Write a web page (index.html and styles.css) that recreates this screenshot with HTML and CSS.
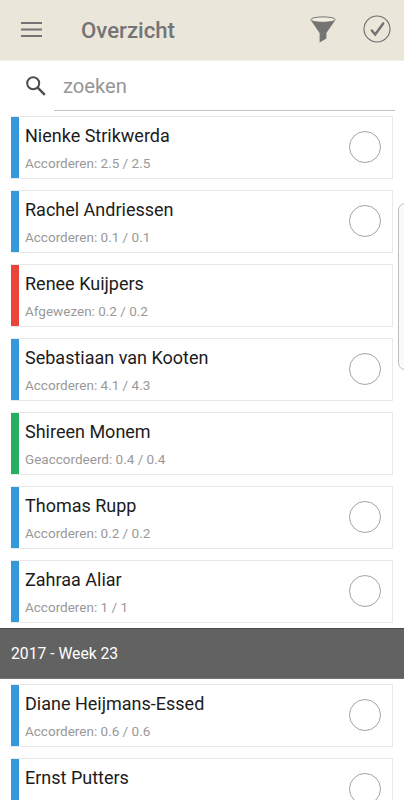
FILE: index.html
```html
<!DOCTYPE html>
<html lang="nl">
<head>
<meta charset="utf-8">
<title>Overzicht</title>
<link rel="stylesheet" href="styles.css">
</head>
<body>
<div class="app">
  <header class="topbar">
    <svg class="menu" viewBox="0 0 21 15" width="21" height="15"><path d="M0 1h21M0 7.5h21M0 14h21" stroke="#747474" stroke-width="1.9"/></svg>
    <h1>Overzicht</h1>
    <svg class="filter" viewBox="0 0 26 27" width="26" height="27"><path d="M.8 4.2 9.6 17v9.6l6.8-4V17l8.8-12.8C23 6.4 3 6.4.8 4.2Z" fill="#747474"/><ellipse cx="13" cy="3.6" rx="12.3" ry="2.7" fill="#f0ede1" stroke="#747474"/></svg>
    <svg class="approve" viewBox="0 0 28 28" width="28" height="28"><circle cx="14" cy="14" r="13" fill="none" stroke="#6c6c6c" stroke-width="1.1"/><path d="m8.8 15.5 3.4 4L20.2 8.4" fill="none" stroke="#747474" stroke-width="2.5" stroke-linecap="round"/></svg>
  </header>
  <div class="search">
    <svg viewBox="0 0 20 20" width="20" height="20"><circle cx="7.2" cy="7.2" r="6" fill="none" stroke="#4c4c4c" stroke-width="2"/><path d="m11.7 11.7 7.1 7.1" stroke="#4c4c4c" stroke-width="2.4"/></svg>
    <div class="field">zoeken</div>
  </div>
  <main class="list">
    <article class="card"><div><h2>Nienke Strikwerda</h2><p>Accorderen: 2.5 / 2.5</p></div><i class="check"></i></article>
    <article class="card"><div><h2>Rachel Andriessen</h2><p>Accorderen: 0.1 / 0.1</p></div><i class="check"></i></article>
    <article class="card rejected"><div><h2>Renee Kuijpers</h2><p>Afgewezen: 0.2 / 0.2</p></div></article>
    <article class="card"><div><h2>Sebastiaan van Kooten</h2><p>Accorderen: 4.1 / 4.3</p></div><i class="check"></i></article>
    <article class="card approved"><div><h2>Shireen Monem</h2><p>Geaccordeerd: 0.4 / 0.4</p></div></article>
    <article class="card"><div><h2>Thomas Rupp</h2><p>Accorderen: 0.2 / 0.2</p></div><i class="check"></i></article>
    <article class="card"><div><h2>Zahraa Aliar</h2><p>Accorderen: 1 / 1</p></div><i class="check"></i></article>
  </main>
  <div class="week">2017 - Week 23</div>
  <section class="list next">
    <article class="card"><div><h2>Diane Heijmans-Essed</h2><p>Accorderen: 0.6 / 0.6</p></div><i class="check"></i></article>
    <article class="card"><div><h2>Ernst Putters</h2></div><i class="check"></i></article>
  </section>
  <div class="edge-handle"></div>
</div>
</body>
</html>
```
FILE: styles.css
```css
* { box-sizing: border-box; }
body { margin: 0; background: #fff; font-family: Roboto, sans-serif; }
h1, h2, p { margin: 0; font-weight: 400; }
svg { display: block; flex: none; }
.app { position: relative; height: 800px; overflow: hidden; }
.topbar {
  display: flex;
  align-items: center;
  height: 61px;
  padding: 0 13px 2px 21px;
  background: #eae6da;
  border-bottom: 1px solid #f0eee9;
}
.topbar h1 {
  flex: 1;
  margin-left: 39px;
  padding-top: 1px;
  font-size: 22.2px;
  line-height: 28px;
  font-weight: 500;
  color: #747474;
}
.filter { margin-right: 27px; }
.search {
  display: flex;
  height: 50px;
  padding: 0 9px 0 26px;
}
.search svg { margin-top: 15px; }
.field {
  flex: 1;
  margin-left: 8px;
  padding-left: 9px;
  border-bottom: 1.5px solid #c0c0c0;
  font-size: 20.2px;
  line-height: 50px;
  color: #969696;
}
.list {
  display: flex;
  flex-direction: column;
  gap: 11px;
  padding: 5px 11px 5px;
}
.card {
  display: flex;
  flex: none;
  justify-content: space-between;
  height: 63px;
  padding: 0 11px 0 14px;
  border: 1px solid #e9e9e9;
  border-left: 0;
  background: linear-gradient(#3498db, #3498db) left / 8px 100% no-repeat;
}
.rejected { background-image: linear-gradient(#ea453a, #ea453a); }
.approved { background-image: linear-gradient(#27ae60, #27ae60); }
.card h2 {
  margin-top: 7px;
  font-size: 18px;
  line-height: 24px;
  color: #1c1c1c;
}
.card p {
  margin-top: 6px;
  font-size: 13.5px;
  line-height: 18px;
  color: #999;
}
.check {
  width: 32px;
  height: 32px;
  margin-top: 14px;
  border: 1px solid #a5a5a5;
  border-radius: 50%;
}
.week {
  height: 51px;
  padding-left: 11px;
  border-top: 1px solid #4b4b4b;
  border-bottom: 1px solid #777;
  background: #626262;
  color: #fff;
  font-size: 15.7px;
  line-height: 50px;
}
.edge-handle {
  position: absolute;
  top: 203px;
  left: 398px;
  width: 16px;
  height: 167px;
  border: 1px solid #bdbdbd;
  border-radius: 7px;
  background: #fafafa;
}
```
